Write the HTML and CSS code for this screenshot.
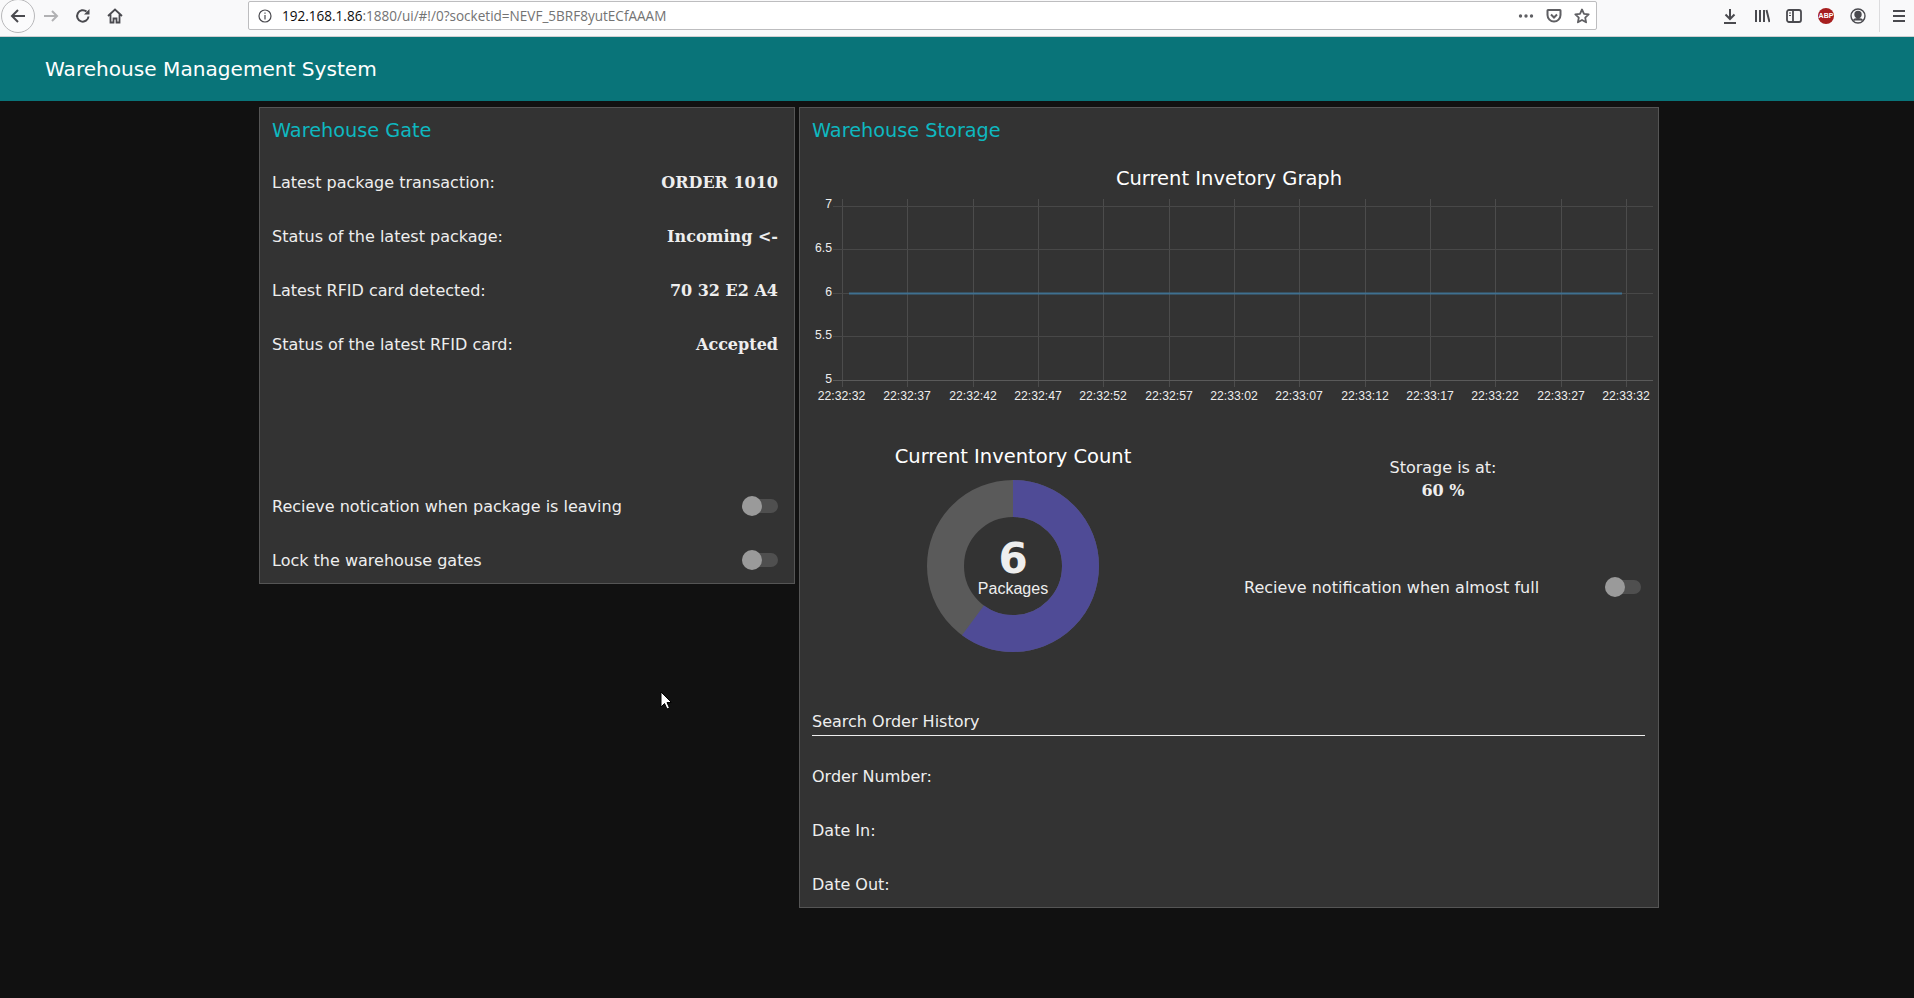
FILE: index.html
```html
<!DOCTYPE html>
<html lang="en">
<head>
    <meta charset="UTF-8">
    <title>Warehouse Management System</title>
    <link rel="stylesheet" href="styles.css">
</head>
<body>

<!-- Browser toolbar -->
<div class="browserBar">
    <div class="navButtons">
        <span class="backButton">
            <svg width="18" height="18" viewBox="0 0 18 18" fill="none" stroke="#4a4a4f" stroke-width="2"><path d="M16 9H3M9 3L3 9l6 6"/></svg>
        </span>
        <span class="navIcon">
            <svg width="16" height="16" viewBox="0 0 16 16" fill="none" stroke="#b1b1b3" stroke-width="2"><path d="M1 8h13M9 3l5 5-5 5"/></svg>
        </span>
        <span class="navIcon">
            <svg width="16" height="16" viewBox="0 0 16 16" fill="none" stroke="#4a4a4f" stroke-width="2"><path d="M13.5 8.5A5.7 5.7 0 1 1 11.5 3.6"/><path d="M14.5 1v5.5H9" fill="#4a4a4f" stroke="none"/></svg>
        </span>
        <span class="navIcon">
            <svg width="16" height="16" viewBox="0 0 16 16" fill="none" stroke="#4a4a4f" stroke-width="1.8"><path d="M1 8l7-6.5L15 8M3.5 6.5V14.5h3v-4h3v4h3V6.5"/></svg>
        </span>
    </div>
    <div class="urlBox">
        <svg class="infoIcon" width="14" height="14" viewBox="0 0 14 14" fill="none" stroke="#4a4a4f" stroke-width="1.2"><circle cx="7" cy="7" r="6"/><path d="M7 6v4.5M7 3.5v1.3"/></svg>
        <span class="urlText"><span class="urlHost">192.168.1.86</span>:1880/ui/#!/0?socketid=NEVF_5BRF8yutECfAAAM</span>
        <span class="urlActions">
            <svg width="16" height="16" viewBox="0 0 16 16" fill="#5f5f63"><circle cx="2.5" cy="8" r="1.7"/><circle cx="8" cy="8" r="1.7"/><circle cx="13.5" cy="8" r="1.7"/></svg>
            <svg width="16" height="16" viewBox="0 0 16 16" fill="none" stroke="#5f5f63" stroke-width="2"><path d="M2 2h12a.5.5 0 0 1 .5.5V7A6.5 6.5 0 0 1 1.5 7V2.500A.5.5 0 0 1 2 2z"/><path d="M5 6.5l3 3 3-3"/></svg>
            <svg width="16" height="16" viewBox="0 0 16 16" fill="none" stroke="#5f5f63" stroke-width="1.8" stroke-linejoin="round"><path d="M8 1.5l2 4.3 4.700.6-3.500 3.200.900 4.700L8 12l-4.100 2.300.900-4.700L1.300 6.400 6 5.800z"/></svg>
        </span>
    </div>
    <div class="toolIcons">
        <svg width="16" height="16" viewBox="0 0 16 16" fill="none" stroke="#4a4a4f" stroke-width="2"><path d="M8 1v10M3.5 6.5L8 11l4.500-4.500M2 15h12"/></svg>
        <svg width="16" height="16" viewBox="0 0 16 16" fill="none" stroke="#4a4a4f" stroke-width="2"><path d="M2 2v12M6 2v12M10 2v12M12.500 2l3 12"/></svg>
        <svg width="16" height="16" viewBox="0 0 16 16" fill="none" stroke="#4a4a4f" stroke-width="1.8"><rect x="1" y="2" width="14" height="12" rx="2"/><path d="M7 2v12"/><path d="M3 5h2M3 7.5h2" stroke-width="1.2"/></svg>
        <span class="abpBadge">ABP</span>
        <svg width="16" height="16" viewBox="0 0 16 16" fill="none" stroke="#4a4a4f" stroke-width="1.4"><circle cx="8" cy="8" r="7"/><circle cx="8" cy="6.5" r="3" fill="#4a4a4f"/><path d="M3.500 12.500c1-2.500 8-2.500 9 0" fill="#4a4a4f"/></svg>
        <span class="toolSeparator"></span>
        <svg width="14" height="14" viewBox="0 0 14 14" fill="none" stroke="#4a4a4f" stroke-width="2"><path d="M1 2h12M1 7h12M1 12h12"/></svg>
    </div>
</div>

<div class="topBar">Warehouse Management System</div>

<div class="pageContent">

    <!-- Gate group -->
    <section class="card gateCard">
        <h2 class="cardTitle">Warehouse Gate</h2>
        <div class="rows">
            <div class="row"><span>Latest package transaction:</span><b class="value">ORDER 1010</b></div>
            <div class="row"><span>Status of the latest package:</span><b class="value">Incoming &lt;-</b></div>
            <div class="row"><span>Latest RFID card detected:</span><b class="value">70 32 E2 A4</b></div>
            <div class="row"><span>Status of the latest RFID card:</span><b class="value">Accepted</b></div>
            <div class="rowSpacer"></div>
            <div class="row"><span>Recieve notication when package is leaving</span><span class="toggle"></span></div>
            <div class="row"><span>Lock the warehouse gates</span><span class="toggle"></span></div>
        </div>
    </section>

    <!-- Storage group -->
    <section class="card storageCard">
        <h2 class="cardTitle">Warehouse Storage</h2>

        <div class="chartBlock">
            <div class="chartTitle">Current Invetory Graph</div>
            <svg class="chart" width="858" height="212" viewBox="0 0 858 212">
                <g stroke="#4c4c4c" stroke-width="1">
                    <path d="M42.5 1V189M107.5 1V189M173.5 1V189M238.5 1V189M303.5 1V189M369.5 1V189M434.5 1V189M499.5 1V189M565.5 1V189M630.5 1V189M695.5 1V189M761.5 1V189M826.5 1V189"/>
                </g>
                <g stroke="#484848" stroke-width="1">
                    <path d="M33 8.5H853M33 51.5H853M33 95.5H853M33 138.5H853"/>
                    <path d="M33 182.5H853" stroke="#5a5a5a"/>
                </g>
                <path d="M49 95.5H822" stroke="#3f7090" stroke-width="2"/>
                <g class="axisY" text-anchor="end">
                    <text x="32" y="10">7</text>
                    <text x="32" y="54">6.5</text>
                    <text x="32" y="98">6</text>
                    <text x="32" y="141">5.5</text>
                    <text x="32" y="185">5</text>
                </g>
                <g class="axisX" text-anchor="middle">
                    <text x="41.5" y="202">22:32:32</text>
                    <text x="107" y="202">22:32:37</text>
                    <text x="173" y="202">22:32:42</text>
                    <text x="238" y="202">22:32:47</text>
                    <text x="303" y="202">22:32:52</text>
                    <text x="369" y="202">22:32:57</text>
                    <text x="434" y="202">22:33:02</text>
                    <text x="499" y="202">22:33:07</text>
                    <text x="565" y="202">22:33:12</text>
                    <text x="630" y="202">22:33:17</text>
                    <text x="695" y="202">22:33:22</text>
                    <text x="761" y="202">22:33:27</text>
                    <text x="826" y="202">22:33:32</text>
                </g>
            </svg>
        </div>

        <div class="lowerBlock">
            <div class="donutColumn">
                <div class="donutTitle">Current Inventory Count</div>
                <svg class="donut" width="176" height="176" viewBox="0 0 176 176">
                    <circle cx="88" cy="88" r="67.5" fill="none" stroke="#5a5a5a" stroke-width="37"/>
                    <circle cx="88" cy="88" r="67.5" fill="none" stroke="#4f4b96" stroke-width="37" stroke-dasharray="254.5 424.1" transform="rotate(-90 88 88)"/>
                    <text class="donutValue" x="88" y="95" text-anchor="middle">6</text>
                    <text class="donutUnit" x="88" y="116" text-anchor="middle">Packages</text>
                </svg>
            </div>
            <div class="storageColumn">
                <div class="storageLevel">
                    <div>Storage is at:</div>
                    <b class="value">60 %</b>
                </div>
                <div class="row notifyRow"><span>Recieve notification when almost full</span><span class="toggle"></span></div>
            </div>
        </div>

        <div class="searchHeader"><span>Search Order History</span></div>
        <div class="rows searchRows">
            <div class="row">Order Number:</div>
            <div class="row">Date In:</div>
            <div class="row">Date Out:</div>
        </div>
    </section>
</div>

<!-- Mouse pointer caught in the screenshot -->
<svg class="pointer" width="12" height="20" viewBox="0 0 12 20"><path d="M1 1v15l3.5-3.5L7 18l2.500-1-2.500-5.500h4.500z" fill="#fff" stroke="#000" stroke-width="1"/></svg>

</body>
</html>
```

FILE: styles.css
```css
html, body {
    margin: 0;
    padding: 0;
    height: 100%;
    overflow: hidden;
    background-color: #111111;
    color: #eeeeee;
    font-family: "DejaVu Sans", sans-serif;
    font-size: 16px;
}

/* Browser toolbar */
.browserBar {
    height: 37px;
    box-sizing: border-box;
    display: flex;
    align-items: center;
    background-color: #f9f9fa;
    border-bottom: 1px solid #cfcfd1;
    color: #0c0c0d;
}

.navButtons {
    width: 248px;
    display: flex;
    align-items: center;
    padding-bottom: 4px;
}

.backButton {
    width: 32px;
    height: 32px;
    margin-left: 1px;
    display: flex;
    align-items: center;
    justify-content: center;
    border: 1px solid #b8b8ba;
    border-radius: 50%;
    background-color: #fbfbfc;
}

.navIcon {
    width: 32px;
    display: flex;
    justify-content: center;
}

.urlBox {
    width: 1349px;
    height: 29px;
    box-sizing: border-box;
    margin-bottom: 5px;
    padding: 0 6px 0 9px;
    display: flex;
    align-items: center;
    background-color: #ffffff;
    border: 1px solid #bdbdbf;
    border-radius: 2px;
}

.infoIcon {
    margin-right: 10px;
}

.urlText {
    font-family: "Open Sans", sans-serif;
    font-size: 13.55px;
    color: #737373;
    white-space: nowrap;
    flex: 1;
}

.urlHost {
    color: #0c0c0d;
}

.urlActions {
    display: flex;
    gap: 12px;
    align-items: center;
}

.toolIcons {
    flex: 1;
    padding: 0 7px 5px 125px;
    display: flex;
    align-items: center;
    gap: 16px;
}

.abpBadge {
    width: 16px;
    height: 16px;
    border-radius: 50%;
    background-color: #a71f1f;
    color: #ffffff;
    font-family: "Liberation Sans", sans-serif;
    font-size: 7px;
    font-weight: bold;
    line-height: 16px;
    text-align: center;
}

.toolSeparator {
    width: 1px;
    height: 32px;
    margin: 0 -4px 0 -3px;
    background-color: #dcdcde;
}

/* Dashboard header */
.topBar {
    height: 64px;
    padding-left: 45px;
    display: flex;
    align-items: center;
    background-color: #097479;
    color: #ffffff;
    font-size: 20.1px;
}

.pageContent {
    padding: 6px 0 0 259px;
    display: flex;
    align-items: flex-start;
    gap: 4px;
}

.card {
    box-sizing: border-box;
    background-color: #333333;
    border: 1px solid #555555;
}

.gateCard {
    width: 536px;
    height: 477px;
}

.storageCard {
    width: 860px;
    height: 801px;
}

.cardTitle {
    margin: 0;
    height: 44px;
    padding-left: 12px;
    display: flex;
    align-items: center;
    font-size: 19.3px;
    font-weight: normal;
    color: #0eb8c0;
}

.rows {
    margin-top: 6px;
    padding: 0 16px 0 12px;
    display: flex;
    flex-direction: column;
    gap: 6px;
}

.row {
    height: 48px;
    display: flex;
    align-items: center;
    justify-content: space-between;
}

.rowSpacer {
    height: 102px;
}

.value {
    font-family: "DejaVu Serif", serif;
    font-weight: bold;
}

/* Off state switch */
.toggle {
    position: relative;
    width: 36px;
    height: 14px;
    border-radius: 7px;
    background-color: #4f4f4f;
}

.toggle::before {
    content: "";
    position: absolute;
    left: 0;
    top: -3px;
    width: 20px;
    height: 20px;
    border-radius: 50%;
    background-color: #9a9a9a;
}

.chartBlock {
    margin-top: 6px;
    height: 252px;
}

.chartTitle {
    height: 40px;
    display: flex;
    align-items: center;
    justify-content: center;
    font-size: 19.5px;
    color: #ffffff;
}

.chart {
    display: block;
}

.axisX text, .axisY text {
    font-family: "Liberation Sans", sans-serif;
    font-size: 12.2px;
    fill: #eeeeee;
}

.lowerBlock {
    height: 262px;
    padding: 26px 0 0 12px;
    display: grid;
    grid-template-columns: 402px 410px;
    column-gap: 24px;
}

.donutColumn {
    display: flex;
    flex-direction: column;
    align-items: center;
}

.donutTitle {
    height: 40px;
    display: flex;
    align-items: center;
    font-size: 19.5px;
    color: #ffffff;
}

.donut {
    margin-top: 2px;
}

.donutValue {
    font-family: "DejaVu Sans", sans-serif;
    font-size: 42px;
    font-weight: bold;
    fill: #eeeeee;
}

.donutUnit {
    font-family: "Liberation Sans", sans-serif;
    font-size: 16px;
    fill: #eeeeee;
}

.storageLevel {
    padding-top: 20px;
    line-height: 23px;
    text-align: center;
}

.notifyRow {
    margin-top: 61px;
    padding: 0 7px 0 6px;
}

.searchHeader {
    height: 48px;
    margin: 0 13px 0 12px;
    box-sizing: border-box;
    display: flex;
    align-items: flex-start;
    position: relative;
    padding-top: 14px;
    line-height: 20px;
}

.searchHeader::after {
    content: "";
    position: absolute;
    left: 0;
    right: 0;
    top: 37px;
    height: 1px;
    background-color: #eeeeee;
}

.pointer {
    position: absolute;
    left: 660px;
    top: 691px;
}
```
